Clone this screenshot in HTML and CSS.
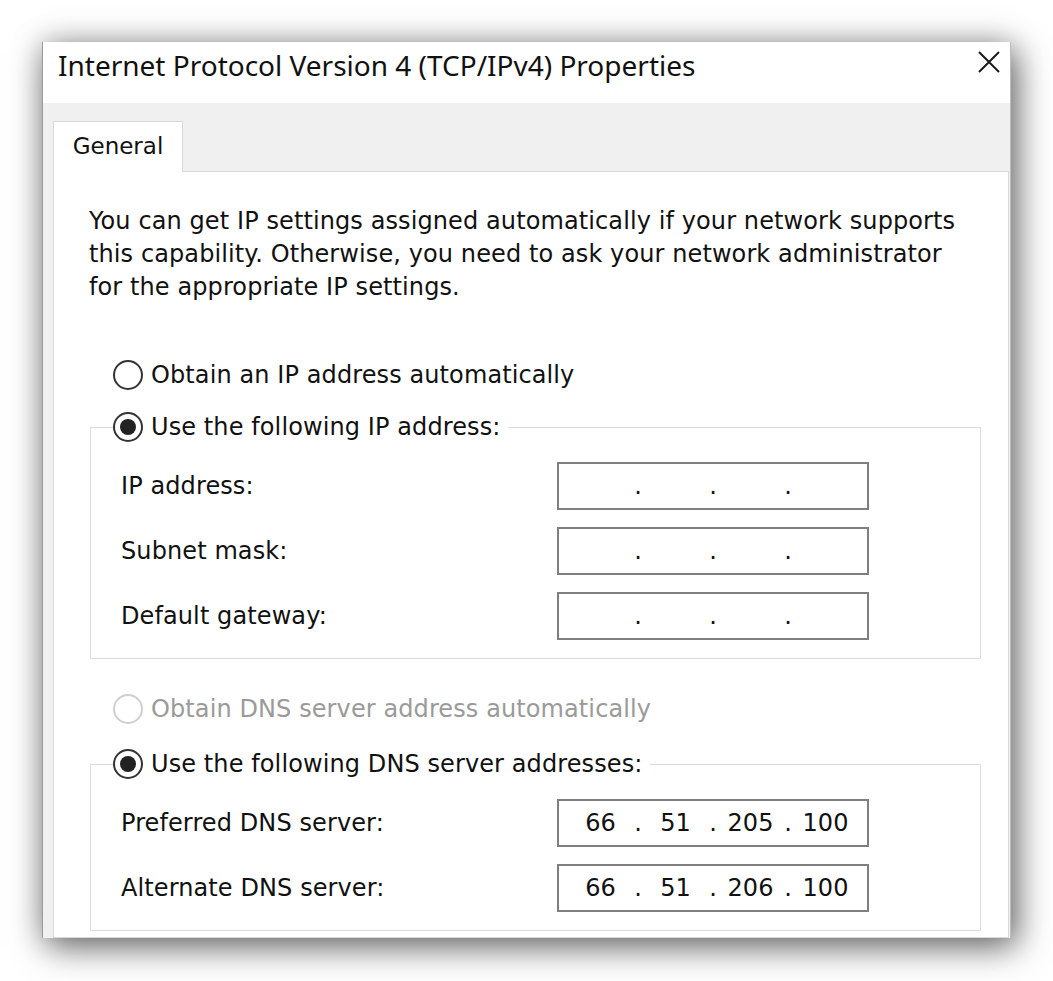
FILE: index.html
```html
<!DOCTYPE html>
<html lang="en">
<head>
<meta charset="utf-8">
<title>Internet Protocol Version 4 (TCP/IPv4) Properties</title>
<link rel="stylesheet" href="styles.css">
</head>
<body>
<div class="window">
  <div class="titlebar">
    <span class="title">Internet Protocol Version 4 (TCP/IPv4) Properties</span>
    <span class="close" aria-label="Close">
      <svg width="22" height="22" viewBox="0 0 22 22"><path d="M1 1 L21 21 M21 1 L1 21" stroke="#1a1a1a" stroke-width="2" fill="none"/></svg>
    </span>
  </div>
  <div class="body">
    <div class="tabs"><div class="tab">General</div></div>
    <div class="panel">
      <p class="intro">You can get IP settings assigned automatically if your network supports this capability. Otherwise, you need to ask your network administrator for the appropriate IP settings.</p>

      <div class="radio-row first-option"><span class="radio"></span><span>Obtain an IP address automatically</span></div>

      <fieldset class="group group-ip">
        <legend class="radio-row"><span class="radio checked"></span><span>Use the following IP address:</span></legend>
        <div class="field-grid">
          <span class="label">IP address:</span>
          <div class="ip"><span class="oct"></span><span class="dot">.</span><span class="oct"></span><span class="dot">.</span><span class="oct"></span><span class="dot">.</span><span class="oct"></span></div>
          <span class="label">Subnet mask:</span>
          <div class="ip"><span class="oct"></span><span class="dot">.</span><span class="oct"></span><span class="dot">.</span><span class="oct"></span><span class="dot">.</span><span class="oct"></span></div>
          <span class="label">Default gateway:</span>
          <div class="ip"><span class="oct"></span><span class="dot">.</span><span class="oct"></span><span class="dot">.</span><span class="oct"></span><span class="dot">.</span><span class="oct"></span></div>
        </div>
      </fieldset>

      <div class="radio-row disabled dns-auto"><span class="radio"></span><span>Obtain DNS server address automatically</span></div>

      <fieldset class="group group-dns">
        <legend class="radio-row"><span class="radio checked"></span><span>Use the following DNS server addresses:</span></legend>
        <div class="field-grid">
          <span class="label">Preferred DNS server:</span>
          <div class="ip"><span class="oct">66</span><span class="dot">.</span><span class="oct">51</span><span class="dot">.</span><span class="oct">205</span><span class="dot">.</span><span class="oct">100</span></div>
          <span class="label">Alternate DNS server:</span>
          <div class="ip"><span class="oct">66</span><span class="dot">.</span><span class="oct">51</span><span class="dot">.</span><span class="oct">206</span><span class="dot">.</span><span class="oct">100</span></div>
        </div>
      </fieldset>
    </div>
  </div>
</div>
</body>
</html>
```

FILE: styles.css
```css
html, body {
  margin: 0;
  padding: 0;
  background: #ffffff;
}
body {
  padding: 42px 0 0 42px;
  height: 981px;
  box-sizing: border-box;
  overflow: hidden;
}
.window {
  width: 969px;
  height: 896px;
  box-sizing: border-box;
  border-left: 1px solid #9a9a9a;
  border-right: 1px solid #bdbdbd;
  background: #f0f0f0;
  overflow: hidden;
  display: flex;
  flex-direction: column;
  box-shadow: 6px 10px 32px rgba(0,0,0,0.5), 0 0 28px rgba(0,0,0,0.25);
  font-family: "DejaVu Sans", "Liberation Sans", sans-serif;
  color: #111;
}
.titlebar {
  height: 61px;
  flex: none;
  background: #ffffff;
  display: flex;
  align-items: flex-start;
  justify-content: space-between;
  padding: 0 10px 0 15px;
}
.title {
  font-family: "Noto Sans", "Open Sans", sans-serif;
  font-size: 28px;
  line-height: 40px;
  margin-top: 3px;
  color: #111;
}
.close {
  display: flex;
  margin-top: 9px;
}
.body {
  flex: 1;
  padding: 18px 1px 0 10px;
  display: flex;
  flex-direction: column;
}
.tabs {
  display: flex;
  position: relative;
  z-index: 1;
  margin-bottom: -1px;
}
.tab {
  width: 130px;
  height: 51px;
  box-sizing: border-box;
  background: #ffffff;
  border: 1px solid #d9d9d9;
  border-bottom: none;
  display: flex;
  align-items: center;
  justify-content: center;
  font-size: 23px;
  padding-bottom: 2px;
}
.panel {
  flex: 1;
  background: #ffffff;
  border: 1px solid #d9d9d9;
  padding: 33px 27px 0 35px;
  font-size: 24px;
  letter-spacing: 0.1px;
}
.intro {
  margin: 0;
  line-height: 33px;
  width: 880px;
}
.radio-row {
  display: flex;
  align-items: center;
  gap: 8px;
  height: 36px;
  line-height: 36px;
}
.first-option {
  margin-top: 53px;
  padding-left: 24px;
}
.radio {
  width: 30px;
  height: 30px;
  box-sizing: border-box;
  border: 2px solid #333333;
  border-radius: 50%;
  background: #fff;
  position: relative;
  flex: none;
}
.radio.checked::after {
  content: "";
  position: absolute;
  left: 5px;
  top: 5px;
  width: 16px;
  height: 16px;
  border-radius: 50%;
  background: #222;
}
.disabled {
  color: #9a9a9a;
}
.disabled .radio {
  border-color: #cfcfcf;
}
.group {
  margin: 16px 0 0 1px;
  padding: 0 0 18px 0;
  border: 1px solid #dcdcdc;
  min-width: 0;
}
.group legend {
  margin-left: 22px;
  padding: 0 8px 0 0;
}
.group-dns {
  margin-top: 19px;
}
.dns-auto {
  margin-top: 32px;
  padding-left: 24px;
}
.field-grid {
  display: grid;
  grid-template-columns: 1fr 312px;
  row-gap: 17px;
  align-items: center;
  padding: 17px 111px 0 30px;
}
.label {
  line-height: 48px;
}
.ip {
  height: 48px;
  box-sizing: border-box;
  border: 2px solid #7f7f7f;
  display: flex;
  align-items: center;
  padding: 0 2px 0 4px;
}
.oct {
  width: 75px;
  text-align: center;
}
.dot {
  width: 0;
  display: flex;
  justify-content: center;
}
```
